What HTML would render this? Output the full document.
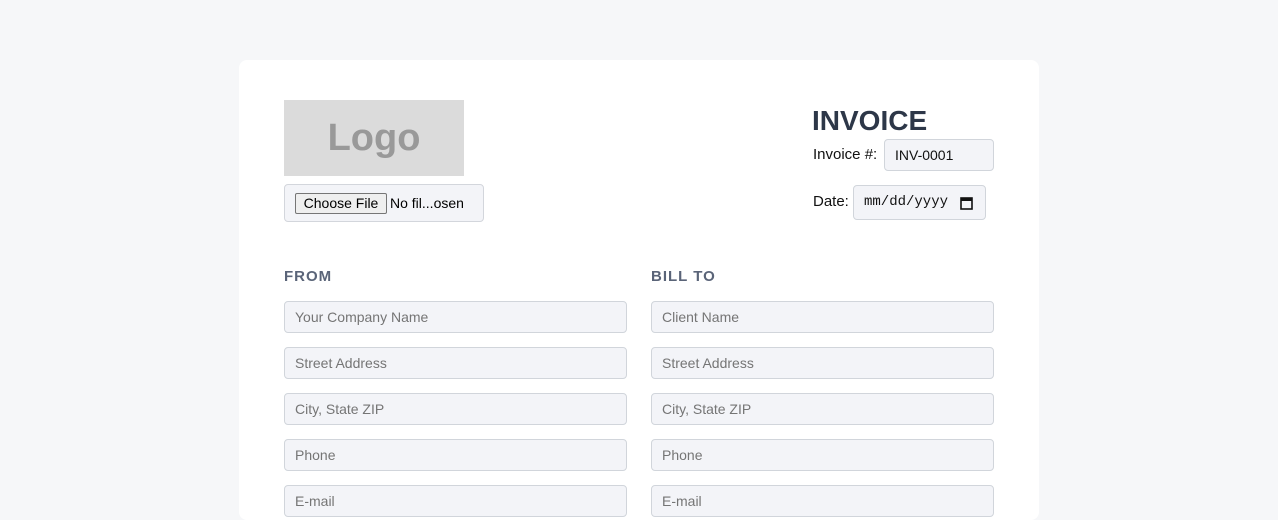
<!DOCTYPE html>
<html><head><style>
*{box-sizing:border-box}
body{margin:0;background:#f6f7f9;width:1278px;height:501px;overflow:hidden;font-family:"Liberation Sans",sans-serif}
.card{position:absolute;left:239px;top:60px;width:800px;height:460px;background:#fff;border-radius:8px}
.abs{position:absolute}
.logo{left:284px;top:100px;width:180px;height:76px;background:#dbdbdb;color:#999;font:bold 38px "Liberation Sans",sans-serif;display:flex;align-items:center;justify-content:center}
.file{left:284px;top:184px;width:200px;height:38px;background:#f3f4f8;border:1px solid #d3d6dc;border-radius:4px;font-size:14px;color:#000}
.btn{position:absolute;left:10px;top:8px;width:92px;height:21px;background:#efefef;border:1px solid #767676;border-radius:2px;font-size:14px;text-align:center;line-height:19px}
.inp{height:32px;background:#f3f4f8;border:1px solid #d1d5db;border-radius:4px;font-size:14px;color:#757575;padding-left:10px;line-height:30px}
.h{font:bold 15px "Liberation Sans",sans-serif;color:#5a6478;letter-spacing:1px}
.lbl{font:15px "Liberation Sans",sans-serif;color:#111}
</style></head><body>
<div class="card"></div>
<div class="abs logo">Logo</div>
<div class="abs file"><div class="btn">Choose File</div><span style="position:absolute;left:105px;top:10px">No fil...osen</span></div>
<div class="abs" style="left:812px;top:105px;font:bold 28px 'Liberation Sans',sans-serif;color:#2d3748">INVOICE</div>
<div class="abs lbl" style="left:813px;top:146px">Invoice #:</div>
<div class="abs inp" style="left:884px;top:139px;width:110px;color:#111">INV-0001</div>
<div class="abs lbl" style="left:813px;top:193px">Date:</div>
<div class="abs inp" style="left:853px;top:185px;width:133px;height:35px;line-height:33px;color:#111;font-family:'Liberation Mono',monospace;font-size:14px">mm/dd/yyyy
<svg style="position:absolute;right:12px;top:10px" width="13" height="14" viewBox="0 0 13 14"><rect x="1" y="2" width="11" height="11" fill="none" stroke="#111" stroke-width="1.6"/><rect x="1" y="2" width="11" height="3" fill="#111"/></svg></div>
<div class="abs h" style="left:284px;top:268px">FROM</div>
<div class="abs h" style="left:651px;top:268px">BILL TO</div>
<div class="abs inp" style="left:284px;top:301px;width:343px">Your Company Name</div>
<div class="abs inp" style="left:284px;top:347px;width:343px">Street Address</div>
<div class="abs inp" style="left:284px;top:393px;width:343px">City, State ZIP</div>
<div class="abs inp" style="left:284px;top:439px;width:343px">Phone</div>
<div class="abs inp" style="left:284px;top:485px;width:343px">E-mail</div>
<div class="abs inp" style="left:651px;top:301px;width:343px">Client Name</div>
<div class="abs inp" style="left:651px;top:347px;width:343px">Street Address</div>
<div class="abs inp" style="left:651px;top:393px;width:343px">City, State ZIP</div>
<div class="abs inp" style="left:651px;top:439px;width:343px">Phone</div>
<div class="abs inp" style="left:651px;top:485px;width:343px">E-mail</div>
</body></html>
